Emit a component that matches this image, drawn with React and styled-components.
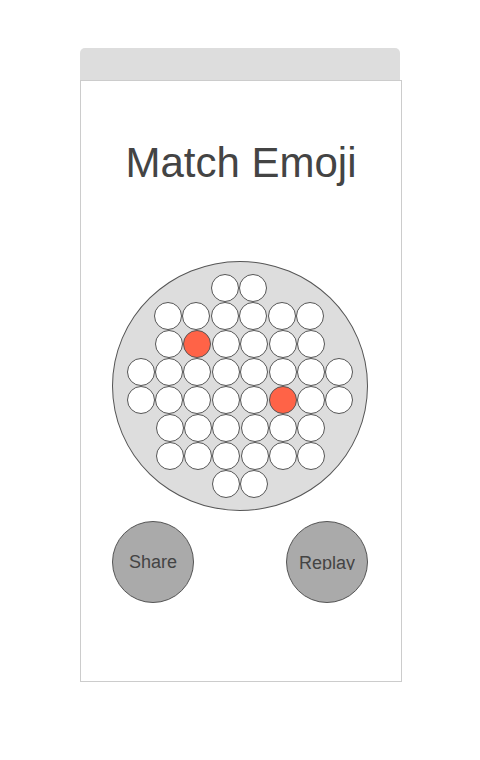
import React from 'react';
import styled, { createGlobalStyle } from 'styled-components';

const GlobalStyle = createGlobalStyle`
    body {
        margin: 0;
        background: #fff;
        font-family: "Liberation Sans", Arial, sans-serif;
    }
`;

const Frame = styled.div`
    width: 322px;
    margin: 48px 0 0 80px;
`;

const TopBar = styled.div`
    width: 320px;
    height: 32px;
    background-color: #dddddd;
    border-radius: 5px 5px 0 0;
`;

const Card = styled.div`
    box-sizing: border-box;
    height: 602px;
    border: 1px solid #cccccc;
    display: flex;
    flex-direction: column;
`;

const Title = styled.h1`
    margin: 0;
    padding-top: 58px;
    font-weight: 400;
    font-size: 42px;
    line-height: 48px;
    color: #444;
    text-align: center;
`;

const Board = styled.div`
    box-sizing: border-box;
    width: 256px;
    height: 250px;
    margin: 74px 0 0 31px;
    border: 1px solid #555;
    border-radius: 50%;
    background-color: #dddddd;
    display: flex;
    flex-direction: column;
    justify-content: center;
    align-items: center;
`;

const Row = styled.div`
    display: flex;
    column-gap: 0.4px;
    margin-left: ${p => p.shift || 0}px;
`;

const Dot = styled.div`
    box-sizing: border-box;
    width: 28px;
    height: 28px;
    border: 1px solid #555;
    border-radius: 50%;
    background-color: ${p => (p.hit ? '#ff6347' : '#fff')};
`;

const Controls = styled.div`
    width: 256px;
    margin: 10px 0 0 31px;
    display: flex;
    justify-content: space-between;
`;

const RoundButton = styled.button`
    box-sizing: border-box;
    width: 82px;
    height: 82px;
    padding: 0;
    border: 1px solid #555;
    border-radius: 50%;
    background-color: #aaaaaa;
    display: flex;
    align-items: center;
    justify-content: center;
    font-family: "Liberation Sans", Arial, sans-serif;
    font-size: 18px;
    color: #444;
    cursor: pointer;
`;

const Label = styled.span`
    display: block;
    height: ${p => (p.clip ? '17px' : '20px')};
    margin-top: ${p => (p.clip ? '-1px' : '0')};
    line-height: 20px;
    overflow: hidden;
`;

const rows = [
    { count: 2, shift: -2 },
    { count: 6, shift: -2, hit: -1 },
    { count: 6, shift: 0, hit: 1 },
    { count: 8, shift: 0 },
    { count: 8, shift: 0, hit: 5 },
    { count: 6, shift: 1 },
    { count: 6, shift: 1 },
    { count: 2, shift: 0 },
];

const App = () => {
    return (
        <>
            <GlobalStyle />
            <Frame>
                <TopBar />
                <Card>
                    <Title>Match Emoji</Title>
                    <Board>
                        {rows.map((row, r) => (
                            <Row key={r} shift={row.shift}>
                                {Array.from({ length: row.count }).map((_, i) => (
                                    <Dot key={i} hit={row.hit === i} />
                                ))}
                            </Row>
                        ))}
                    </Board>
                    <Controls>
                        <RoundButton>
                            <Label>Share</Label>
                        </RoundButton>
                        <RoundButton>
                            <Label clip>Replay</Label>
                        </RoundButton>
                    </Controls>
                </Card>
            </Frame>
        </>
    );
};

export default App;
